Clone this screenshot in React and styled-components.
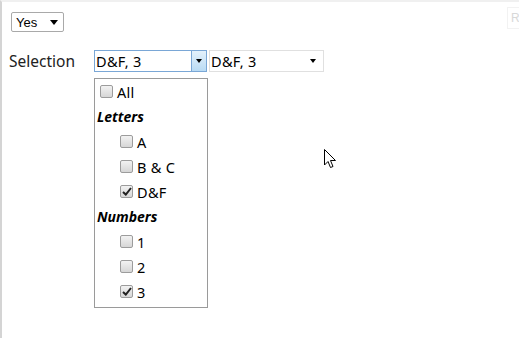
import React from "react";
import styled, { createGlobalStyle } from "styled-components";

const Global = createGlobalStyle`
  html, body { margin: 0; padding: 0; background: #fff; }
  body { font-family: "Noto Sans", "Open Sans", sans-serif; color: #222; }
`;

const Page = styled.div`
  position: relative;
  box-sizing: border-box;
  width: 519px;
  height: 338px;
  overflow: hidden;
  border-left: 2px solid #d4d4d4;
  border-top: 2px solid #f0f0f0;
  padding: 10px 0 0 7px;
`;

const SmallSelect = styled.div`
  box-sizing: border-box;
  margin-left: 2px;
  width: 53px;
  height: 20px;
  border: 1px solid #a9a9a9;
  border-radius: 2px;
  display: flex;
  align-items: center;
  justify-content: space-between;
  padding: 0 5px 0 4px;
  font-family: "Liberation Sans", Arial, sans-serif;
  font-size: 13px;
  color: #000;
`;

const Tri = styled.span`
  width: 0;
  height: 0;
  border-left: ${(p) => p.$w || 4}px solid transparent;
  border-right: ${(p) => p.$w || 4}px solid transparent;
  border-top: ${(p) => (p.$w ? p.$w + 1 : 5)}px solid #000;
`;

const Row = styled.div`
  display: flex;
  align-items: flex-start;
  margin-top: 18px;
`;

const Label = styled.div`
  width: 85px;
  height: 22px;
  line-height: 22px;
  font-size: 15.5px;
  color: #222;
`;

const Column = styled.div`
  display: flex;
  flex-direction: column;
`;

const Selects = styled.div`
  display: flex;
  gap: 2px;
`;

const Combo = styled.div`
  box-sizing: border-box;
  width: ${(p) => p.$w}px;
  height: 22px;
  border: 1px solid ${(p) => (p.$focus ? "#7aa7d6" : "#e0e0e0")};
  display: flex;
  align-items: stretch;
  font-size: 14.5px;
  color: #000;
`;

const ComboText = styled.div`
  flex: 1;
  display: flex;
  align-items: center;
  padding-left: 1px;
  letter-spacing: 0.3px;
`;

const ComboBtn = styled.div`
  width: 14px;
  display: flex;
  align-items: center;
  justify-content: center;
  background: ${(p) =>
    p.$active ? "linear-gradient(#e4f1fb, #b9dbf4)" : "transparent"};
  border-left: ${(p) => (p.$active ? "1px solid #7aa7d6" : "none")};
  margin-right: ${(p) => (p.$active ? 0 : 3)}px;
`;

const Panel = styled.div`
  box-sizing: border-box;
  margin-top: 6px;
  width: 114px;
  border: 1px solid #9a9a9a;
  padding: 0 0 3px;
  background: #fff;
`;

const Item = styled.div`
  height: 25px;
  display: flex;
  align-items: center;
  gap: 4px;
  padding-left: ${(p) => (p.$indent ? 25 : 5)}px;
  font-size: 14.5px;
  color: #000;
  letter-spacing: 0.3px;
`;

const Group = styled.div`
  height: 25px;
  display: flex;
  align-items: center;
  padding-left: 2px;
  font-size: 14px;
  font-weight: bold;
  font-style: italic;
  color: #000;
`;

const Box = styled.span`
  box-sizing: border-box;
  width: 13px;
  height: 13px;
  border: 1px solid #9c9c9c;
  border-radius: 2px;
  background: linear-gradient(#f2f2f2, #d6d6d6);
  display: flex;
  align-items: center;
  justify-content: center;
`;

const Cursor = styled.svg`
  position: absolute;
  left: 322px;
  top: 147px;
`;

const Corner = styled.div`
  position: absolute;
  right: -2px;
  top: 5px;
  width: 14px;
  height: 22px;
  box-sizing: border-box;
  border: 1px solid #f2f2f2;
  padding-left: 3px;
  font-family: "Liberation Sans", Arial, sans-serif;
  font-size: 12px;
  line-height: 20px;
  color: #d8d8d8;
`;

function Check({ checked }) {
  return (
    <Box>
      {checked && (
        <svg width="10" height="9" viewBox="0 0 10 9">
          <path d="M1 5 L3.8 7.6 L9 1" fill="none" stroke="#222" strokeWidth="2" />
        </svg>
      )}
    </Box>
  );
}

const options = [
  { type: "item", label: "All" },
  { type: "group", label: "Letters" },
  { type: "item", label: "A", indent: true },
  { type: "item", label: "B & C", indent: true },
  { type: "item", label: "D&F", indent: true, checked: true },
  { type: "group", label: "Numbers" },
  { type: "item", label: "1", indent: true },
  { type: "item", label: "2", indent: true },
  { type: "item", label: "3", indent: true, checked: true },
];

export default function App() {
  return (
    <>
      <Global />
      <Page>
        <SmallSelect>
          <span>Yes</span>
          <Tri />
        </SmallSelect>
        <Row>
          <Label>Selection</Label>
          <Column>
            <Selects>
              <Combo $w={113} $focus>
                <ComboText>D&amp;F, 3</ComboText>
                <ComboBtn $active>
                  <Tri $w={3} />
                </ComboBtn>
              </Combo>
              <Combo $w={115}>
                <ComboText>D&amp;F, 3</ComboText>
                <ComboBtn>
                  <Tri $w={3} />
                </ComboBtn>
              </Combo>
            </Selects>
            <Panel>
              {options.map((o, i) =>
                o.type === "group" ? (
                  <Group key={i}>{o.label}</Group>
                ) : (
                  <Item key={i} $indent={o.indent}>
                    <Check checked={o.checked} />
                    <span>{o.label}</span>
                  </Item>
                )
              )}
            </Panel>
          </Column>
        </Row>
        <Cursor width="13" height="21" viewBox="0 0 13 21">
          <path
            d="M0.5 0.5 L0.5 16 L4 12.5 L6.5 18.5 L9 17.5 L6.5 11.5 L11.5 11.5 Z"
            fill="#fff"
            stroke="#000"
            strokeWidth="1"
          />
        </Cursor>
        <Corner>R</Corner>
      </Page>
    </>
  );
}
